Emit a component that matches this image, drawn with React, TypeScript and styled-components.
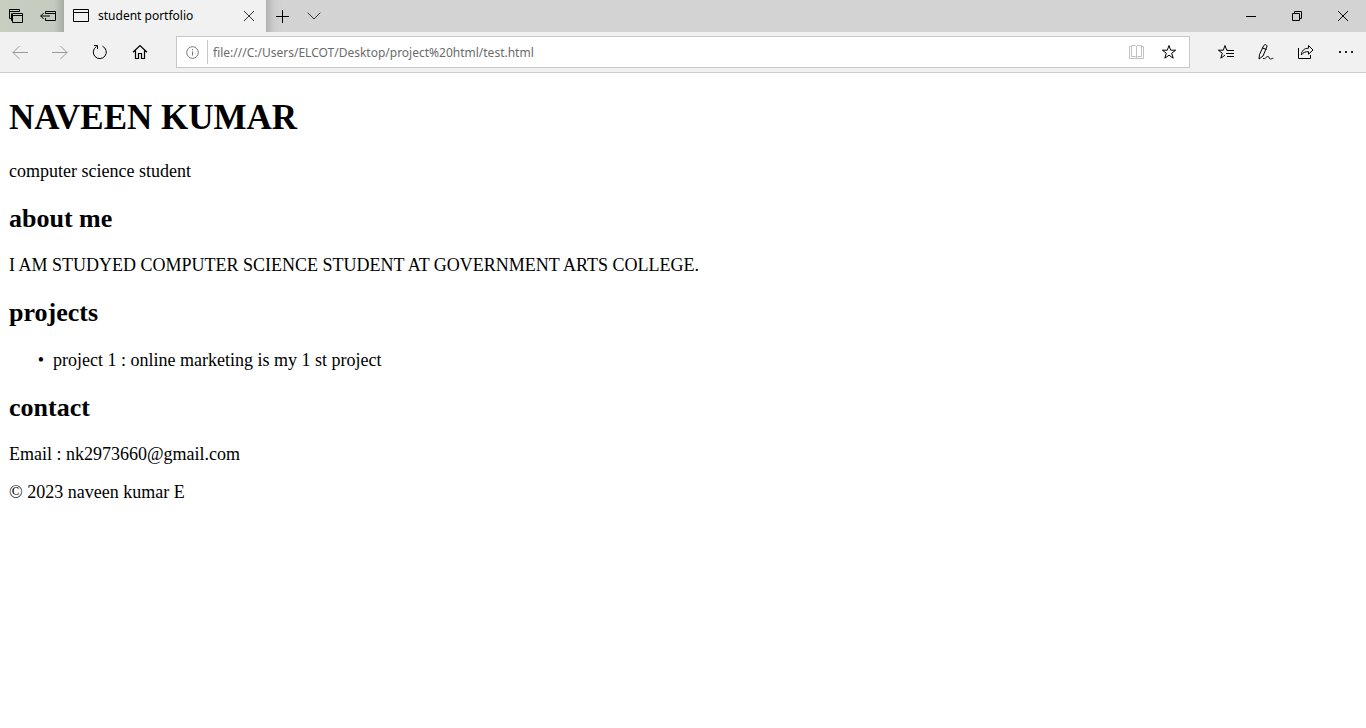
import React from "react";
import styled, { createGlobalStyle } from "styled-components";

const GlobalStyle = createGlobalStyle`
  * { box-sizing: border-box; }
  body { margin: 0; background: #fff; color: #000; }
`;

const uiFont = `"Noto Sans", "Open Sans", sans-serif`;

const TitleBar = styled.header`
  display: flex;
  height: 32px;
  background: #d3d3d3;
`;

const TabActions = styled.div`
  display: flex;
  background: linear-gradient(90deg, #c8cfc1 0, #c5cbbf 54px, #a9aea4 64px);
`;

const IconButton = styled.button<{ $width?: number; $color?: string }>`
  display: flex;
  align-items: center;
  justify-content: center;
  flex: none;
  width: ${(p) => p.$width ?? 32}px;
  height: 100%;
  padding: 0;
  border: 0;
  background: none;
  color: ${(p) => p.$color ?? "#000"};
`;

const Tab = styled.div`
  display: flex;
  align-items: center;
  gap: 8px;
  width: 202px;
  padding-left: 9px;
  background: #f1f1f1;
  font: 12px/16px ${uiFont};
`;

const TabTitle = styled.span`
  flex: 1;
  white-space: nowrap;
`;

const NewTabArea = styled.div`
  display: flex;
  flex: 1;
  background: linear-gradient(90deg, #b2b2b2 0, #cdcdcd 8px, #d3d3d3 16px);
`;

const ButtonGroup = styled.div`
  display: flex;
`;

const Toolbar = styled.nav`
  display: flex;
  align-items: center;
  gap: 16px;
  height: 41px;
  border-bottom: 1px solid #cbcbcb;
  background: #f1f1f1;

  ${ButtonGroup} {
    height: 100%;
  }
`;

const AddressBar = styled.form`
  display: flex;
  align-items: center;
  flex: 1;
  height: 32px;
  border: 1px solid #c8c8c8;
  background: #fff;
`;

const AddressInput = styled.input`
  flex: 1;
  min-width: 0;
  height: 24px;
  padding: 0 5px;
  border: 0;
  border-left: 1px solid #c8c8c8;
  outline: 0;
  background: none;
  color: #6b6b6b;
  font: 12px/20px ${uiFont};
`;

const Page = styled.main`
  padding: 1px 9px;
  font: 18px/20px "Liberation Serif", "Times New Roman", serif;
`;

const Name = styled.h1`
  margin: 24px 0 23px;
  font-size: 35px;
  line-height: 40px;
`;

const Heading = styled.h2`
  margin: 23px 0 21px;
  font-size: 26px;
  line-height: 30px;
`;

const Paragraph = styled.p`
  margin: 18px 0;
`;

const List = styled.ul`
  margin: 22px 0;
  padding-left: 44px;

  li::marker {
    content: "•\\00a0\\00a0";
  }
`;

type IconProps = { w: number; h: number; crisp?: boolean; children: React.ReactNode };

const Icon = ({ w, h, crisp, children }: IconProps) => (
  <svg
    width={w}
    height={h}
    viewBox={`0 0 ${w} ${h}`}
    fill="none"
    stroke="currentColor"
    shapeRendering={crisp ? "crispEdges" : undefined}
    aria-hidden="true"
  >
    {children}
  </svg>
);

export default function App() {
  return (
    <>
      <GlobalStyle />
      <TitleBar>
        <TabActions>
          <IconButton aria-label="Tabs you've set aside">
            <Icon w={14} h={14}>
              <path d="M2.5 9.5H.5V.5h10v2M.5 2.5h10" />
              <path d="M3.500 11.500h-1v-7M3.500 4.500h10v9h-10zM3.500 6.500h10" />
            </Icon>
          </IconButton>
          <IconButton aria-label="Set these tabs aside">
            <Icon w={16} h={12}>
              <path d="M5.5 4V1.5h10v9h-10V8M5.5 3.5h10M.7 6H10M3.7 3l-3 3 3 3" />
            </Icon>
          </IconButton>
        </TabActions>
        <Tab>
          <Icon w={17} h={14}>
            <path d="M.5.5h15v12H.5zM.5 3.5h15" />
          </Icon>
          <TabTitle>student portfolio</TabTitle>
          <IconButton $width={34} $color="#333" aria-label="Close tab">
            <Icon w={10} h={10}>
              <path d="M0 0l10 10M10 0L0 10" />
            </Icon>
          </IconButton>
        </Tab>
        <NewTabArea>
          <IconButton aria-label="New tab">
            <Icon w={13} h={13}>
              <path d="M6.5 0v13M0 6.5h13" />
            </Icon>
          </IconButton>
          <IconButton $color="#333" aria-label="Show tab previews">
            <Icon w={14} h={8}>
              <path d="M.7 .7L7 7l6.300-6.300" />
            </Icon>
          </IconButton>
        </NewTabArea>
        <ButtonGroup>
          <IconButton $width={46} aria-label="Minimize">
            <Icon w={10} h={2}>
              <path d="M0 1.5h10" />
            </Icon>
          </IconButton>
          <IconButton $width={46} aria-label="Restore">
            <Icon w={10} h={10}>
              <path d="M.5 2.500h7v7h-7zM2.500 2.500v-2h7v7h-2" />
            </Icon>
          </IconButton>
          <IconButton $width={46} aria-label="Close">
            <Icon w={10} h={10}>
              <path d="M0 0l10 10M10 0L0 10" />
            </Icon>
          </IconButton>
        </ButtonGroup>
      </TitleBar>

      <Toolbar>
        <ButtonGroup>
          <IconButton $width={40} $color="#9a9a9a" aria-label="Back">
            <Icon w={16} h={15}>
              <path d="M1 7.500h15M7.500 1L1 7.500 7.500 14" />
            </Icon>
          </IconButton>
          <IconButton $width={40} $color="#9a9a9a" aria-label="Forward">
            <Icon w={16} h={15}>
              <path d="M0 7.500h15M8.500 1L15 7.500 8.500 14" />
            </Icon>
          </IconButton>
          <IconButton $width={40} aria-label="Refresh">
            <Icon w={16} h={16}>
              <path d="M10.500 2.200A6.500 6.500 0 1 1 4.500 2.500M2 1.500h3.500V5" />
            </Icon>
          </IconButton>
          <IconButton $width={40} aria-label="Home">
            <Icon w={16} h={16}>
              <path d="M1 8.300L8 1.500l7 6.800M3.500 6.500v8h3v-5h3v5h3v-8" strokeWidth="1.200" />
            </Icon>
          </IconButton>
        </ButtonGroup>

        <AddressBar onSubmit={(e) => e.preventDefault()}>
          <IconButton type="button" $width={30} $color="#777" aria-label="Site information">
            <Icon w={13} h={13}>
              <circle cx="6.500" cy="6.500" r="5.800" />
              <path d="M6.500 5.500v4M6.500 3v1.300" />
            </Icon>
          </IconButton>
          <AddressInput
            aria-label="Address"
            defaultValue="file:///C:/Users/ELCOT/Desktop/project%20html/test.html"
          />
          <IconButton type="button" $width={24} $color="#c2c2c2" aria-label="Reading view">
            <Icon w={16} h={14}>
              <path d="M2.500 1.500H.5v12h14v-12h-2M2.500.5h4l1 1 1-1h4v11h-4l-1 1-1-1h-4zM7.500 1.500v12" />
            </Icon>
          </IconButton>
          <IconButton type="button" $width={40} aria-label="Add to favorites">
            <Icon w={16} h={16}>
              <path d="M8 1.500l1.700 4.700h5L10.700 9.200l1.500 5L8 11.200l-4.200 3 1.500-5L1.300 6.200h5z" />
            </Icon>
          </IconButton>
        </AddressBar>

        <ButtonGroup>
          <IconButton $width={40} aria-label="Favorites">
            <Icon w={16} h={16}>
              <path d="M10 6.200H8.700L7 1.500 5.300 6.200h-5L4.300 9.200l-1.500 5L7 11.200" />
              <path d="M9 6.500h7M8 9.500h8M9 12.500h7" />
            </Icon>
          </IconButton>
          <IconButton $width={40} aria-label="Add notes">
            <Icon w={16} h={16}>
              <path d="M1 15l.5-4.500L5.500 2C6.500-.2 9.500.4 8.800 3L5 12l-4 3M4.500 4l4 1.500" />
              <path d="M5 14.500c2.500 1 3-2 4.800-2 1.700 0 1 2.500 2.700 2.500 1.200 0 1.500-1 2.800-.5" />
            </Icon>
          </IconButton>
          <IconButton $width={40} aria-label="Share">
            <Icon w={16} h={16}>
              <path d="M.5 4v10.500h12V11" />
              <path d="M10.500 1.500L15 6l-4.500 4.300V7.700C7.500 7.500 5 8.500 3.300 11 3.500 7 6 4.300 10.500 4.200z" />
            </Icon>
          </IconButton>
          <IconButton $width={40} $color="#222" aria-label="Settings and more">
            <Icon w={14} h={2} crisp>
              <path d="M0 1h2M6 1h2M12 1h2" strokeWidth="2" />
            </Icon>
          </IconButton>
        </ButtonGroup>
      </Toolbar>

      <Page>
        <Name>NAVEEN KUMAR</Name>
        <Paragraph>computer science student</Paragraph>
        <Heading>about me</Heading>
        <Paragraph>I AM STUDYED COMPUTER SCIENCE STUDENT AT GOVERNMENT ARTS COLLEGE.</Paragraph>
        <Heading>projects</Heading>
        <List>
          <li>project 1 : online marketing is my 1 st project</li>
        </List>
        <Heading>contact</Heading>
        <Paragraph>Email : nk2973660@gmail.com</Paragraph>
        <Paragraph>© 2023 naveen kumar E</Paragraph>
      </Page>
    </>
  );
}
